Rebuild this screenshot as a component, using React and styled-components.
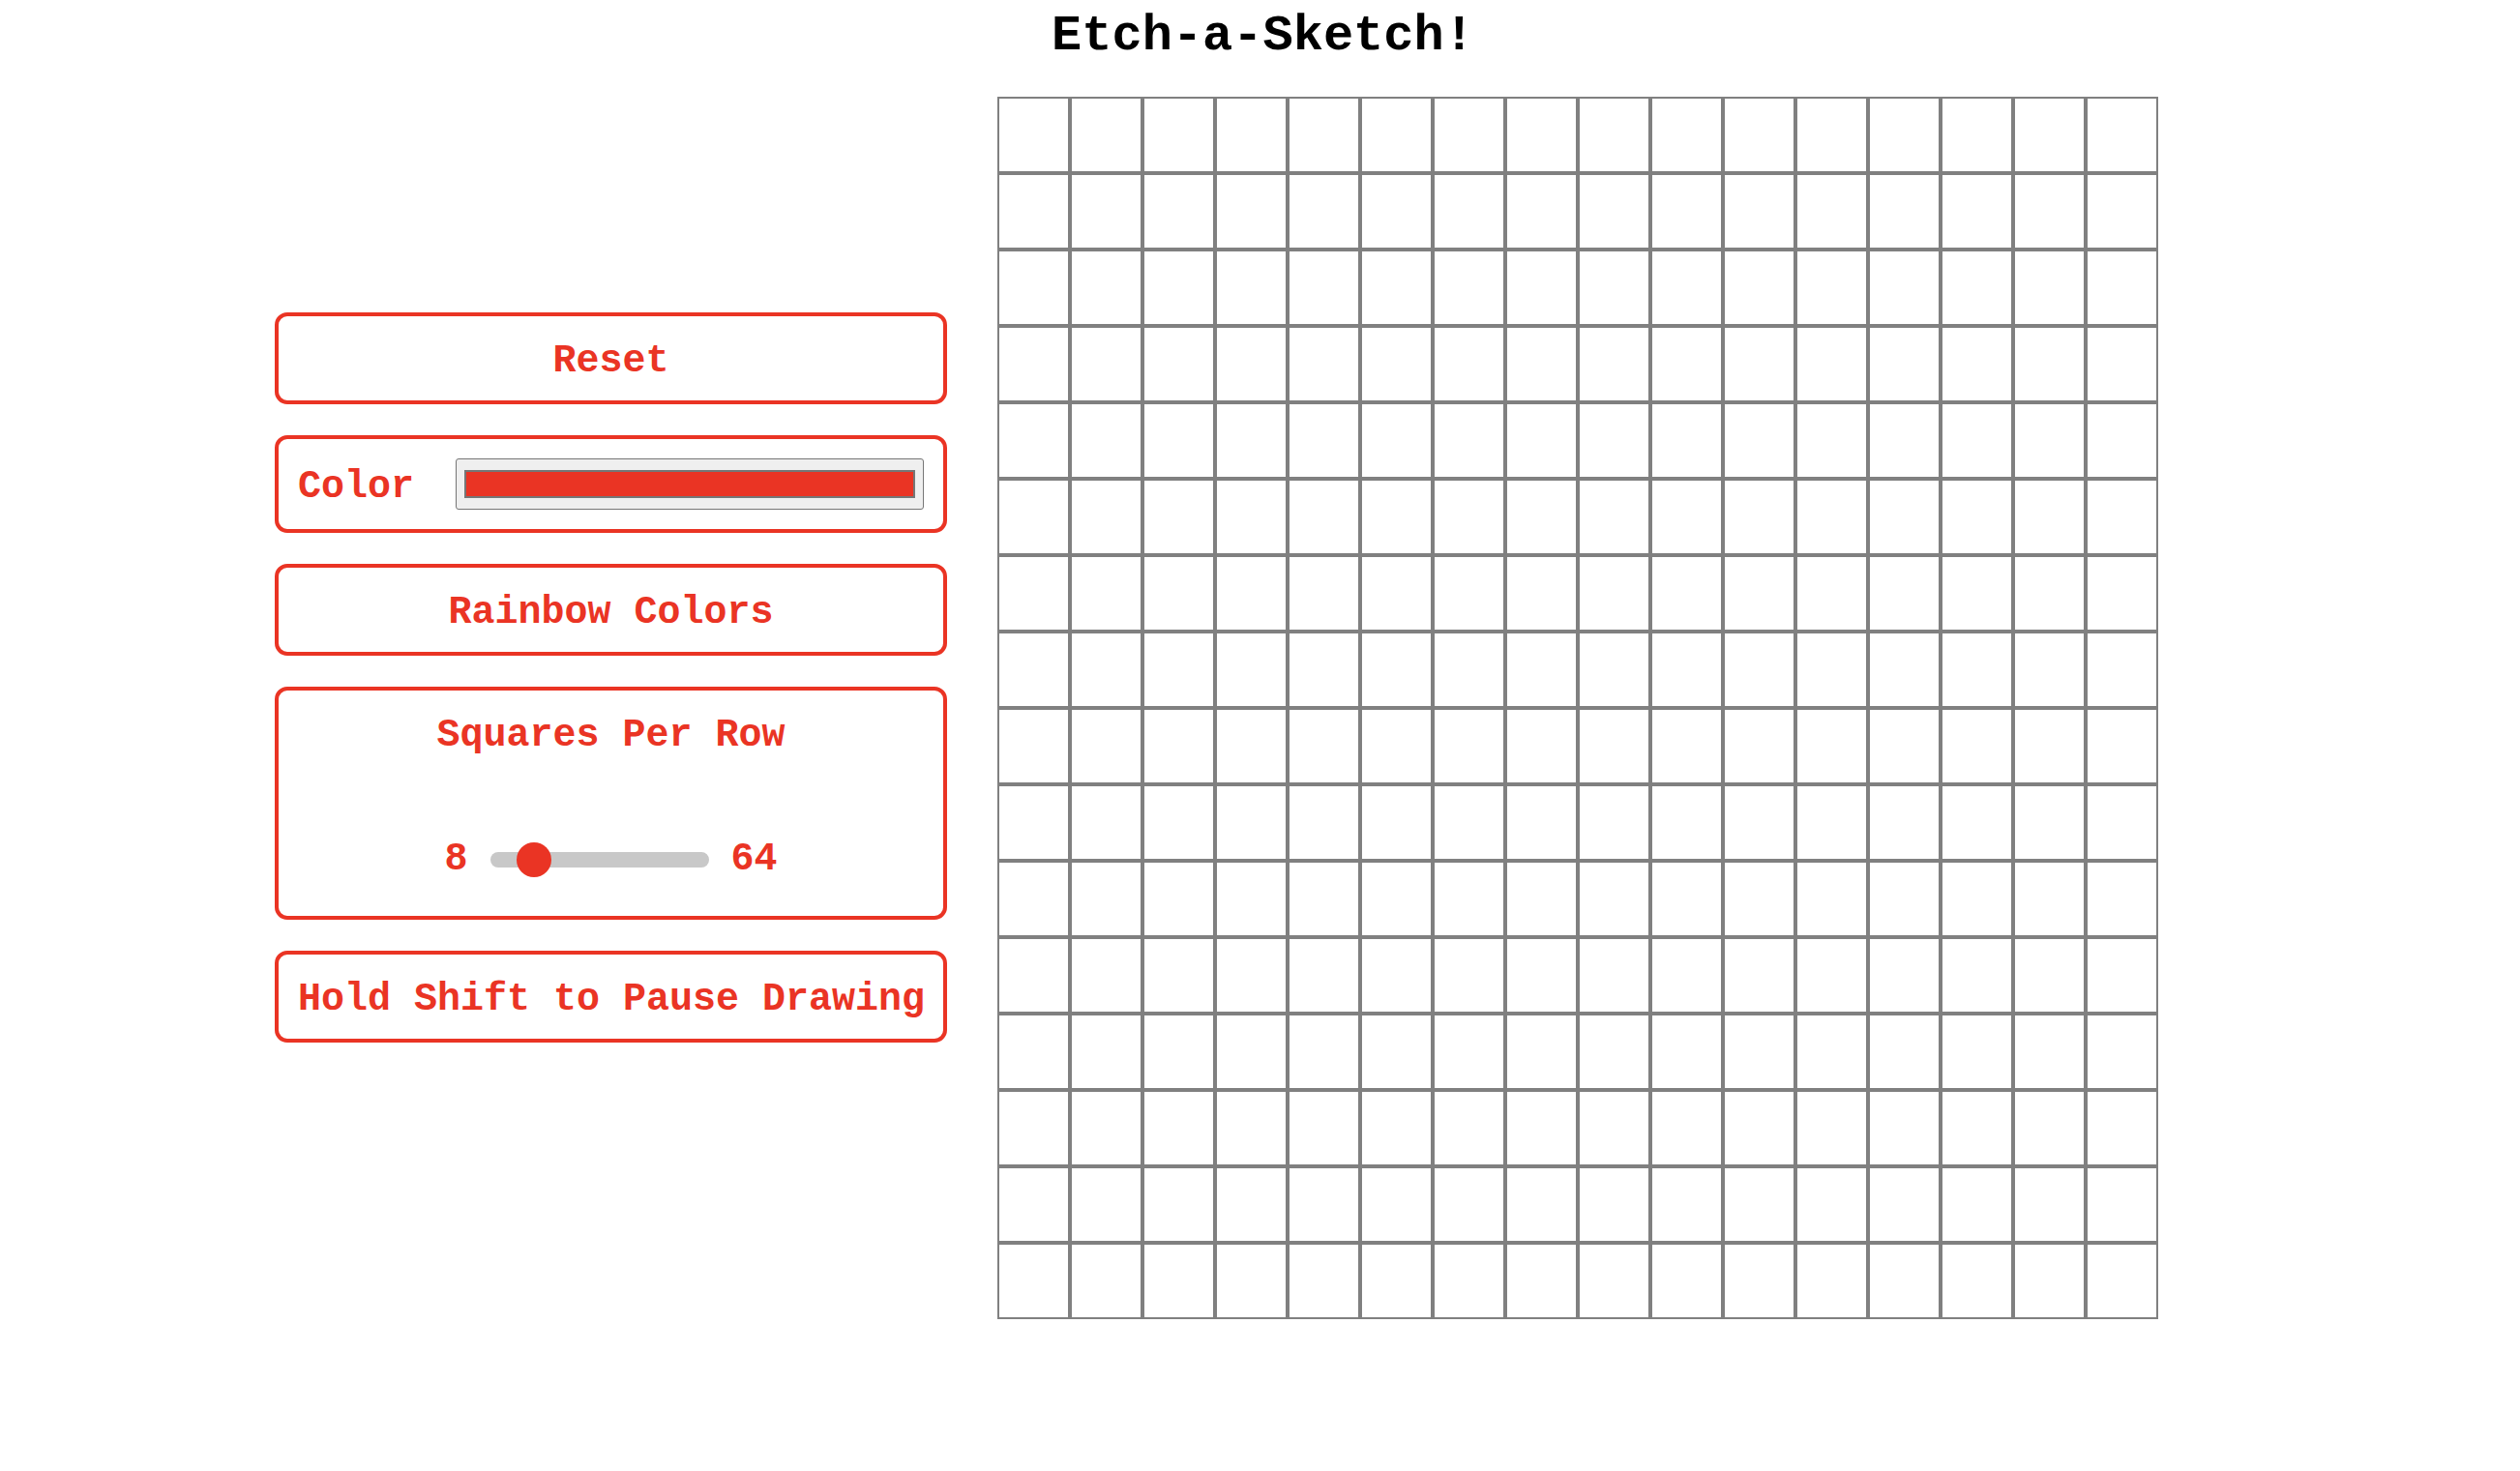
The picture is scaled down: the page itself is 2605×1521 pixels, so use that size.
import React, { useState } from "react";
import styled, { createGlobalStyle } from "styled-components";

const RED = "#ea3424";
const GRAY = "#808080";

const GlobalStyle = createGlobalStyle`
  html, body {
    margin: 0;
    padding: 0;
    background: #ffffff;
  }
  body {
    font-family: "Liberation Mono", "Courier New", monospace;
    font-weight: bold;
  }
  * { box-sizing: border-box; }
`;

const Page = styled.div`
  width: 2605px;
  min-height: 1521px;
  display: flex;
  flex-direction: column;
`;

const Title = styled.h1`
  margin: 0;
  padding-top: 8px;
  padding-left: 6px;
  font-family: "Liberation Mono", "Courier New", monospace;
  font-weight: bold;
  font-size: 52px;
  line-height: 60px;
  text-align: center;
  color: #000;
`;

const Main = styled.main`
  display: flex;
  align-items: flex-start;
  gap: 52px;
  padding-left: 284px;
  margin-top: 32px;
`;

const Panel = styled.section`
  width: 695px;
  margin-top: 223px;
  display: flex;
  flex-direction: column;
  gap: 32px;
`;

const boxBase = `
  border: 4px solid ${RED};
  border-radius: 13px;
  background: #fff;
  color: ${RED};
  font-family: "Liberation Mono", "Courier New", monospace;
  font-weight: bold;
  font-size: 40px;
  line-height: 47px;
`;

const Button = styled.button`
  ${boxBase}
  width: 100%;
  padding: 23px 20px 17px;
  text-align: center;
  cursor: pointer;
  white-space: nowrap;
`;

const ColorRow = styled.label`
  ${boxBase}
  display: flex;
  align-items: center;
  justify-content: space-between;
  padding: 20px;
`;

const ColorLabel = styled.span`
  padding-top: 6px;
  line-height: 47px;
`;

const ColorInput = styled.input`
  appearance: none;
  -webkit-appearance: none;
  width: 484px;
  height: 53px;
  padding: 0;
  margin: 0;
  border: 1px solid #767676;
  border-radius: 3px;
  background: #efefef;
  cursor: pointer;

  &::-webkit-color-swatch-wrapper {
    padding: 11px 8px;
  }
  &::-webkit-color-swatch {
    border: 2px solid #767676;
    border-radius: 0;
  }
`;

const SliderBox = styled.div`
  ${boxBase}
  padding: 23px 20px 40px;
  display: flex;
  flex-direction: column;
  align-items: center;
`;

const SliderTitle = styled.div`
  line-height: 47px;
`;

const SliderRow = styled.div`
  margin-top: 87px;
  height: 36px;
  display: flex;
  align-items: center;
  gap: 23px;
  line-height: 36px;
`;

const Range = styled.input`
  appearance: none;
  -webkit-appearance: none;
  width: 226px;
  height: 36px;
  margin: 0;
  background: transparent;
  cursor: pointer;

  &::-webkit-slider-runnable-track {
    height: 16px;
    border-radius: 8px;
    background: #c8c8c8;
  }
  &::-webkit-slider-thumb {
    -webkit-appearance: none;
    width: 36px;
    height: 36px;
    margin-top: -10px;
    border-radius: 50%;
    background: ${RED};
    border: none;
  }
`;

const Note = styled.div`
  ${boxBase}
  padding: 23px 20px 17px;
  text-align: center;
  white-space: nowrap;
`;

const Grid = styled.div`
  display: grid;
  grid-template-columns: repeat(${(p) => p.$n}, 75px);
  grid-template-rows: repeat(${(p) => p.$n}, 79px);
`;

const Cell = styled.div`
  border: 2px solid ${GRAY};
  background: #fff;
`;

export default function App() {
  const [color, setColor] = useState("#ea3424");
  const [size, setSize] = useState(16);
  const cells = Array.from({ length: 16 * 16 }, (_, i) => i);

  return (
    <>
      <GlobalStyle />
      <Page>
        <Title>Etch-a-Sketch!</Title>
        <Main>
          <Panel>
            <Button type="button">Reset</Button>
            <ColorRow>
              <ColorLabel>Color</ColorLabel>
              <ColorInput
                type="color"
                value={color}
                onChange={(e) => setColor(e.target.value)}
              />
            </ColorRow>
            <Button type="button">Rainbow Colors</Button>
            <SliderBox>
              <SliderTitle>Squares Per Row</SliderTitle>
              <SliderRow>
                <span>8</span>
                <Range
                  type="range"
                  min="8"
                  max="64"
                  value={size}
                  onChange={(e) => setSize(Number(e.target.value))}
                />
                <span>64</span>
              </SliderRow>
            </SliderBox>
            <Note>Hold Shift to Pause Drawing</Note>
          </Panel>
          <Grid $n={16}>
            {cells.map((i) => (
              <Cell key={i} />
            ))}
          </Grid>
        </Main>
      </Page>
    </>
  );
}
